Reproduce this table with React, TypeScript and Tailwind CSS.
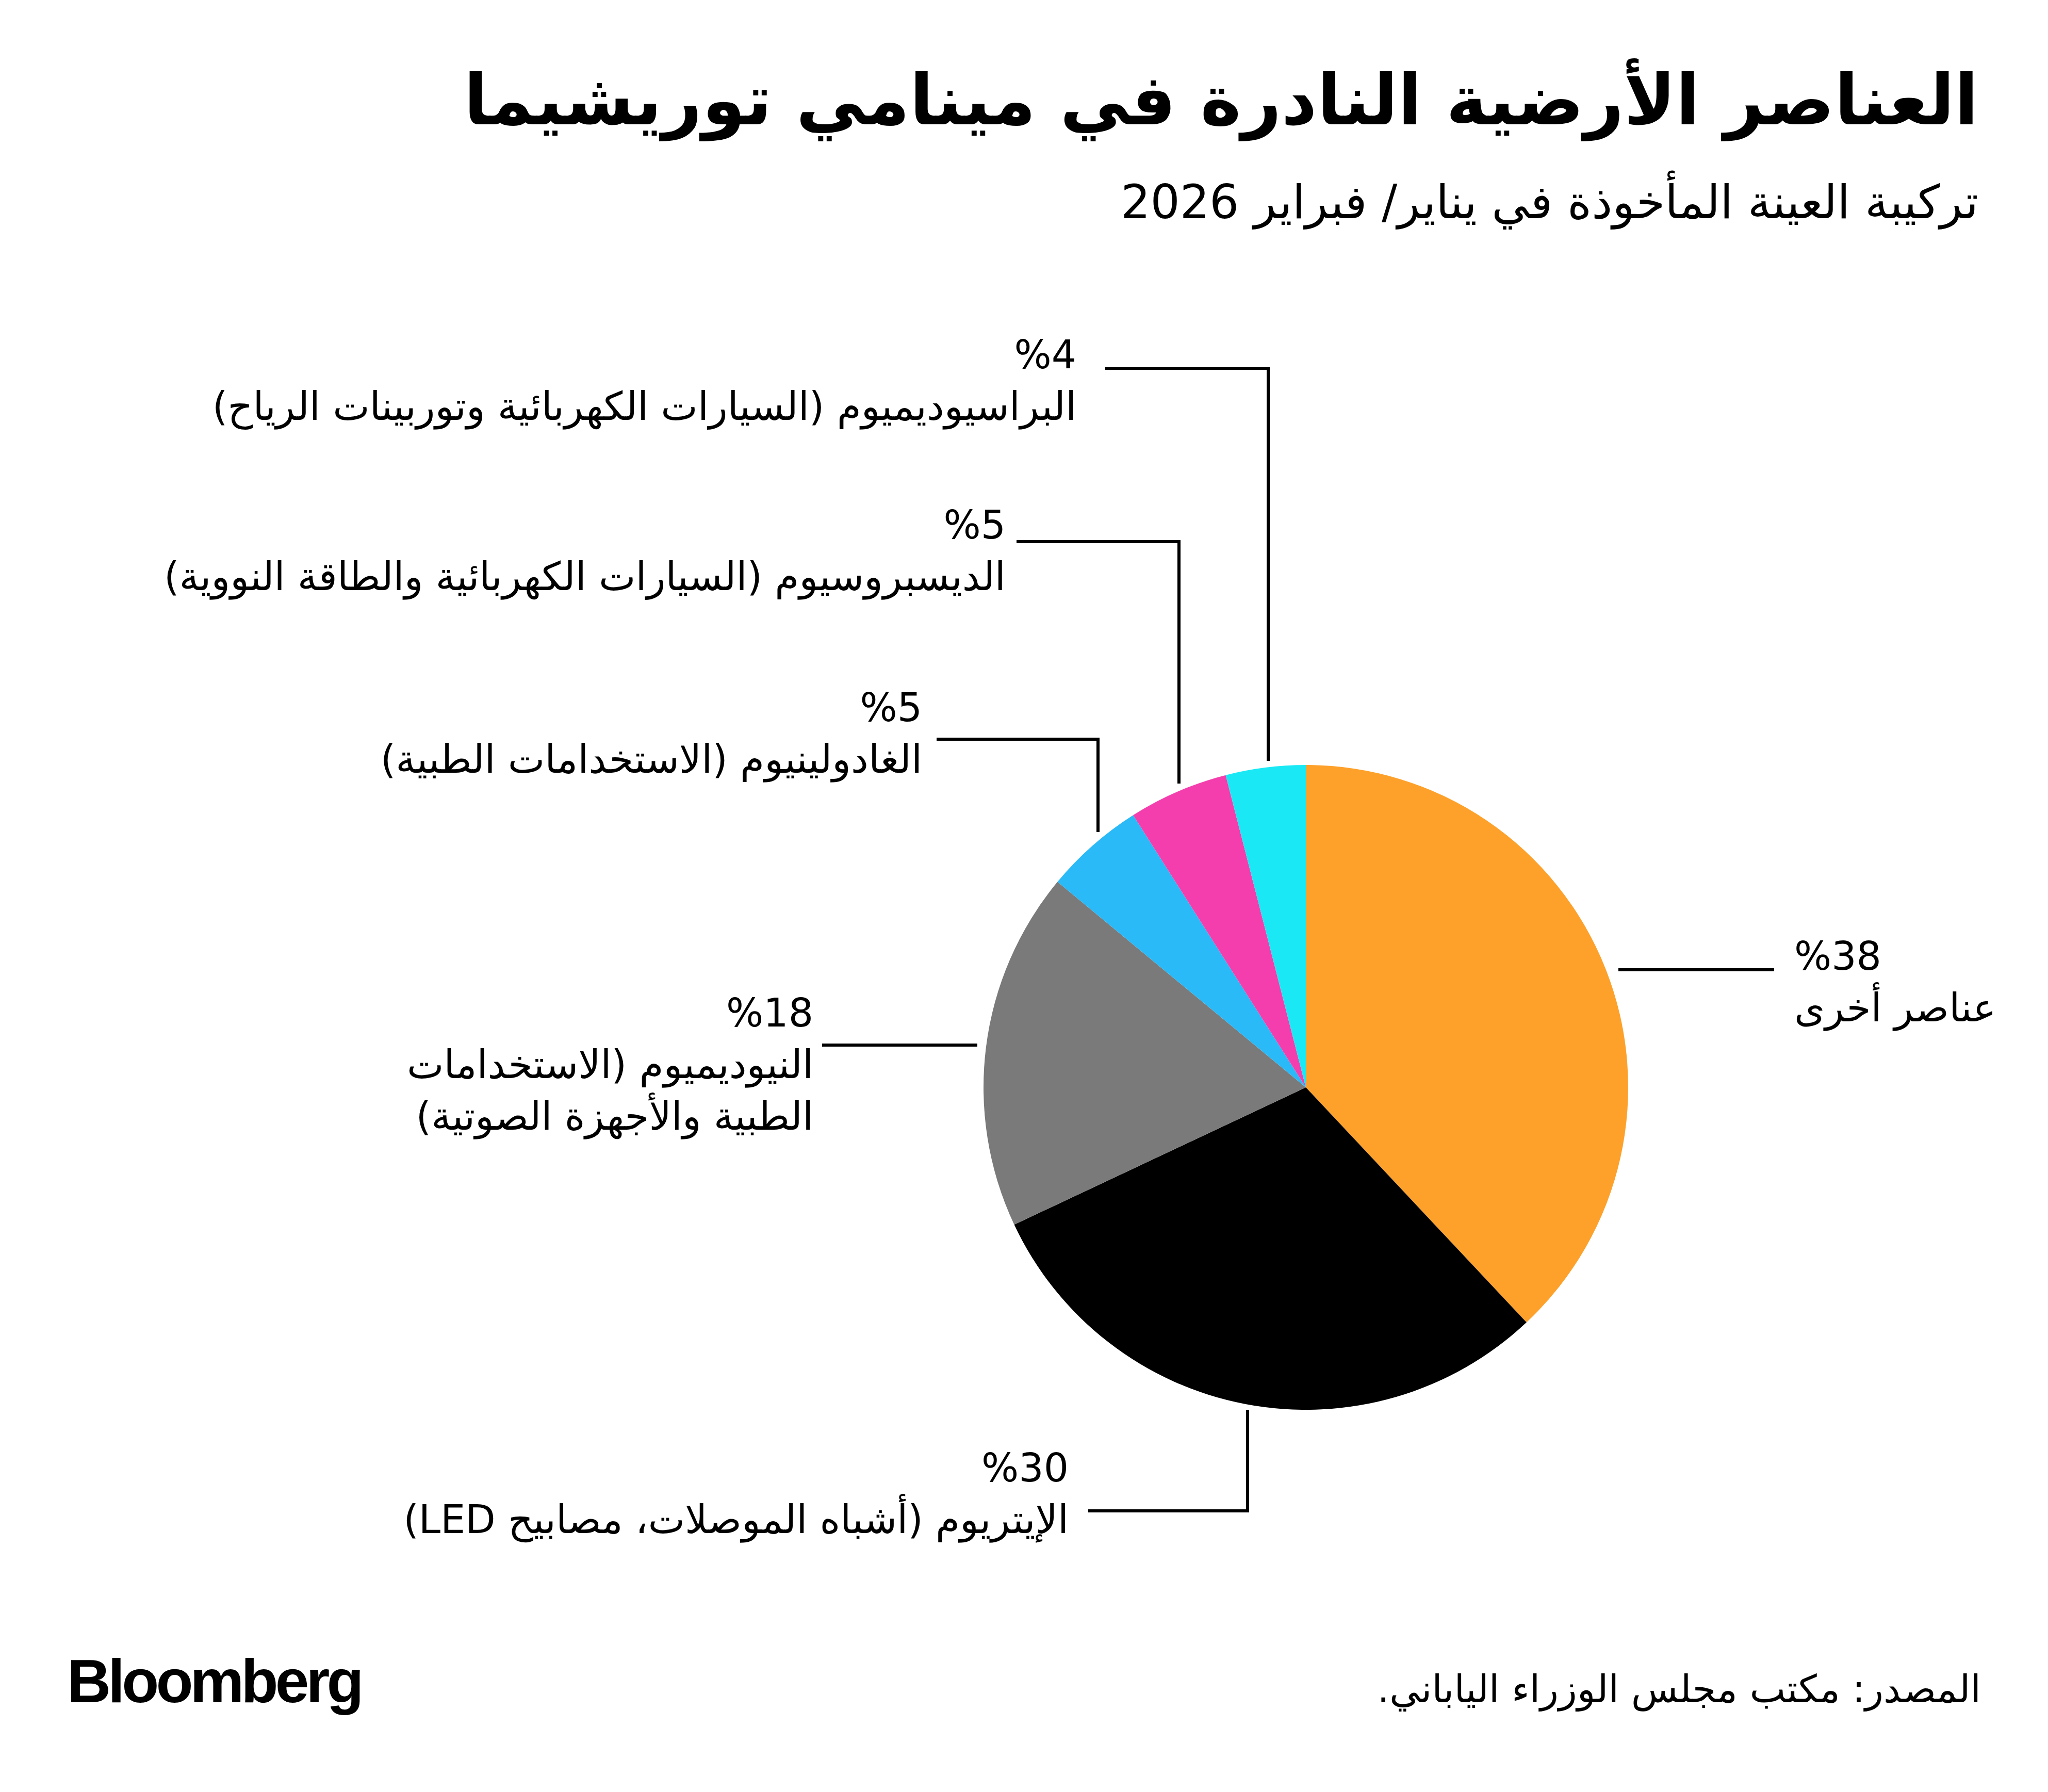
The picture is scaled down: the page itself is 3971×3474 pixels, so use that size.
import React from 'react';

interface Slice {
  value: number;
  color: string;
}

interface Label {
  pct: string;
  lines: string[];
  top: number;
  right?: number;
  left?: number;
}

// pie data, clockwise from 12 o'clock
const slices: Slice[] = [
  { value: 38, color: '#fda12b' },
  { value: 30, color: '#000000' },
  { value: 18, color: '#7a7a7a' },
  { value: 5, color: '#29baf7' },
  { value: 5, color: '#f53ead' },
  { value: 4, color: '#1ae9f5' },
];

const CX = 2532;
const CY = 1548;
const R = 625;

const labels: Label[] = [
  { pct: '%4', lines: ['البراسيوديميوم (السيارات الكهربائية وتوربينات الرياح)'], top: 78, right: 1884 },
  { pct: '%5', lines: ['الديسبروسيوم (السيارات الكهربائية والطاقة النووية)'], top: 408, right: 2021 },
  { pct: '%5', lines: ['الغادولينيوم (الاستخدامات الطبية)'], top: 762, right: 2183 },
  { pct: '%18', lines: ['النيوديميوم (الاستخدامات', 'الطبية والأجهزة الصوتية)'], top: 1354, right: 2394 },
  { pct: '%30', lines: ['الإيتريوم (أشباه الموصلات، مصابيح LED)'], top: 2236, right: 1899 },
  { pct: '%38', lines: ['عناصر أخرى'], top: 1244, left: 3479 },
];

// leader lines as polylines
const leaders: string[] = [
  '2143,154 2459,154 2459,915',
  '1971,490 2286,490 2286,959',
  '1816,873 2129,873 2129,1053',
  '1594,1466 1895,1466',
  '2110,2369 2419,2369 2419,2173',
  '3138,1320 3440,1320',
];

const point = (frac: number) => {
  const a = frac * Math.PI * 2;
  return [CX + R * Math.sin(a), CY - R * Math.cos(a)];
};

const Pie: React.FC = () => {
  const total = slices.reduce((s, d) => s + d.value, 0);
  let acc = 0;
  return (
    <svg className="absolute inset-0" width={3971} height={2560} viewBox="0 0 3971 2560">
      {slices.map((s, i) => {
        const start = acc / total;
        acc += s.value;
        const end = acc / total;
        const [x1, y1] = point(start);
        const [x2, y2] = point(end);
        const large = end - start > 0.5 ? 1 : 0;
        return (
          <path
            key={i}
            d={`M ${CX} ${CY} L ${x1} ${y1} A ${R} ${R} 0 ${large} 1 ${x2} ${y2} Z`}
            fill={s.color}
          />
        );
      })}
      {leaders.map((p, i) => (
        <polyline key={i} points={p} fill="none" stroke="#000" strokeWidth={6} />
      ))}
    </svg>
  );
};

const arabic = { fontFamily: '"DejaVu Sans", sans-serif' };

export default function App() {
  return (
    <div className="w-[3971px] h-[3474px] bg-white text-black flex flex-col" style={arabic}>
      {/* Header */}
      <div dir="rtl" className="h-[560px] pr-[135px] pt-[127px] flex flex-col items-start">
        <h1 className="text-[135px] leading-none font-bold whitespace-nowrap">
          العناصر الأرضية النادرة في مينامي توريشيما
        </h1>
        <p className="mt-[85px] text-[90px] leading-none whitespace-nowrap">
          تركيبة العينة المأخوذة في يناير/ فبراير 2026
        </p>
      </div>

      {/* Chart */}
      <div className="relative h-[2560px]">
        <Pie />
        {labels.map((l, i) => (
          <div
            key={i}
            dir="rtl"
            className={`absolute whitespace-nowrap text-[76px] leading-[100px] ${l.left !== undefined ? 'text-left' : 'text-right'}`}
            style={{ top: l.top, right: l.right, left: l.left }}
          >
            <div dir={l.left !== undefined ? 'ltr' : 'rtl'}>{l.pct}</div>
            {l.lines.map((t, j) => (
              <div key={j}>{t}</div>
            ))}
          </div>
        ))}
      </div>

      {/* Footer */}
      <div className="flex-1 flex items-baseline justify-between px-[130px] pt-[80px]">
        <span
          className="text-[118px] leading-none font-bold tracking-[-0.05em]"
          style={{ fontFamily: '"Liberation Sans", Arial, sans-serif' }}
        >
          Bloomberg
        </span>
        <span dir="rtl" className="text-[74px] leading-none whitespace-nowrap">
          المصدر: مكتب مجلس الوزراء الياباني.
        </span>
      </div>
    </div>
  );
}
